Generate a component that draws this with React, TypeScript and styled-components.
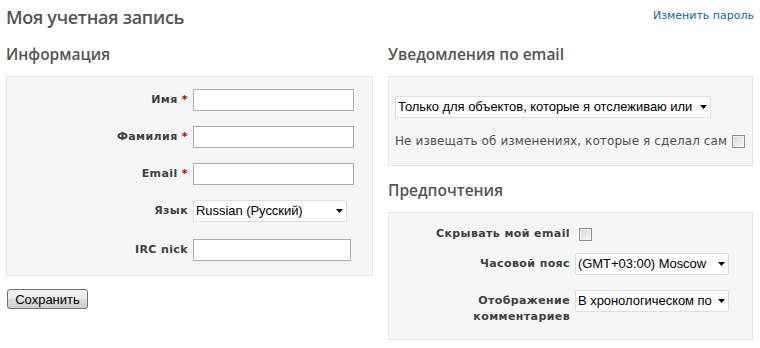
import React from "react";
import styled, { createGlobalStyle } from "styled-components";

const GlobalStyle = createGlobalStyle`
  html, body { margin: 0; padding: 0; background: #ffffff; }
  body { font-family: "DejaVu Sans", Verdana, sans-serif; font-size: 11px; color: #484848; }
  * { box-sizing: border-box; }
`;

const Page = styled.div`
  width: 760px;
  padding: 5px 7px 0 6px;
`;

const TopBar = styled.div`
  display: flex;
  justify-content: space-between;
  align-items: flex-start;
  height: 24px;
`;

const Title = styled.h2`
  margin: 0;
  font-family: "Open Sans", "Noto Sans", sans-serif;
  font-size: 18px;
  line-height: 24px;
  font-weight: 600;
  letter-spacing: -0.3px;
  color: #555555;
`;

const ContextLink = styled.a`
  margin-top: 3px;
  margin-right: -1px;
  font-size: 11px;
  line-height: 16px;
  color: #116699;
  text-decoration: none;
`;

const Columns = styled.div`
  display: grid;
  grid-template-columns: 367px 365px;
  column-gap: 15px;
  margin-top: 15px;
  align-items: start;
`;

const Column = styled.div`
  display: flex;
  flex-direction: column;
  align-items: flex-start;
`;

const SectionTitle = styled.h3<{ $mt?: number }>`
  margin: ${(p) => p.$mt ?? 0}px 0 12px;
  font-family: "Open Sans", "Noto Sans", sans-serif;
  font-size: 15.5px;
  line-height: 20px;
  font-weight: 600;
  color: #555555;
`;

const Box = styled.div<{ $pad: string }>`
  align-self: stretch;
  display: flex;
  flex-direction: column;
  align-items: flex-start;
  padding: ${(p) => p.$pad};
  background: #f6f6f6;
  border: 1px solid #e4e4e4;
  color: #505050;
`;

const FieldRow = styled.div<{ $mt?: number }>`
  display: grid;
  grid-template-columns: 175px auto;
  column-gap: 5px;
  align-items: start;
  margin-top: ${(p) => p.$mt ?? 0}px;
`;

const Label = styled.label`
  padding-top: 3px;
  font-weight: bold;
  font-size: 11px;
  line-height: 16px;
  letter-spacing: 0.4px;
  text-align: right;
  color: #3f3f3f;
`;

const Required = styled.span`
  color: #bb0000;
`;

const TextInput = styled.input<{ $w: number }>`
  width: ${(p) => p.$w}px;
  height: 22px;
  margin: 0;
  padding: 1px 3px;
  border: 1px solid #abadb3;
  background: #ffffff;
  font-family: "Liberation Sans", Arial, sans-serif;
  font-size: 13px;
`;

const SelectWrap = styled.div<{ $w: number }>`
  position: relative;
  width: ${(p) => p.$w}px;
  height: 22px;
`;

const Select = styled.select`
  appearance: none;
  width: 100%;
  height: 100%;
  margin: 0;
  padding: 0 16px 0 2px;
  border: 1px solid #dedede;
  border-radius: 2px;
  background: #ffffff;
  color: #000000;
  font-family: "Liberation Sans", Arial, sans-serif;
  font-size: 13px;
  letter-spacing: -0.05px;
  line-height: 20px;
  text-overflow: clip;
  white-space: nowrap;
  overflow: hidden;
`;

const Arrow = styled.svg`
  position: absolute;
  right: 4px;
  top: 9px;
  pointer-events: none;
`;

const CheckLine = styled.div`
  display: flex;
  align-items: center;
  gap: 5px;
  margin-top: 14px;
  font-size: 12px;
  line-height: 18px;
  letter-spacing: 0.1px;
  color: #505050;
`;

const Check = styled.input.attrs({ type: "checkbox" })<{ $m?: string }>`
  appearance: none;
  flex: none;
  width: 13px;
  height: 13px;
  margin: ${(p) => p.$m ?? "0"};
  border: 1px solid #8f8f8f;
  background: linear-gradient(135deg, #d8d8d8 0%, #ececec 60%, #f8f8f8 100%);
  box-shadow: inset 0 0 0 1px #f4f4f4;
`;

const SaveButton = styled.button`
  margin: 13px 0 0 1px;
  width: 81px;
  height: 20px;
  padding: 0;
  border: 1px solid #707070;
  border-radius: 3px;
  background: linear-gradient(#f2f2f2 0%, #ebebeb 50%, #dddddd 51%, #cfcfcf 100%);
  font-family: "Liberation Sans", Arial, sans-serif;
  font-size: 13px;
  color: #000000;
`;

const DropArrow = () => (
  <Arrow width="7" height="4" viewBox="0 0 7 4">
    <path d="M0 0 H7 L3.5 4 Z" fill="#000" />
  </Arrow>
);

const SelectField = ({ w, value }: { w: number; value: string }) => (
  <SelectWrap $w={w}>
    <Select defaultValue={value}>
      <option value={value}>{value}</option>
    </Select>
    <DropArrow />
  </SelectWrap>
);

export default function App() {
  return (
    <>
      <GlobalStyle />
      <Page>
        <TopBar>
          <Title>Моя учетная запись</Title>
          <ContextLink href="#">Изменить пароль</ContextLink>
        </TopBar>
        <Columns>
          <Column>
            <SectionTitle>Информация</SectionTitle>
            <Box $pad="12px 6px 14px">
              <FieldRow>
                <Label>
                  Имя <Required>*</Required>
                </Label>
                <TextInput $w={161} />
              </FieldRow>
              <FieldRow $mt={15}>
                <Label>
                  Фамилия <Required>*</Required>
                </Label>
                <TextInput $w={161} />
              </FieldRow>
              <FieldRow $mt={15}>
                <Label>
                  Email <Required>*</Required>
                </Label>
                <TextInput $w={161} />
              </FieldRow>
              <FieldRow $mt={15}>
                <Label>Язык</Label>
                <SelectField w={154} value="Russian (Русский)" />
              </FieldRow>
              <FieldRow $mt={17}>
                <Label>IRC nick</Label>
                <TextInput $w={158} />
              </FieldRow>
            </Box>
            <SaveButton>Сохранить</SaveButton>
          </Column>
          <Column>
            <SectionTitle>Уведомления по email</SectionTitle>
            <Box $pad="19px 6px 15px">
              <SelectField w={316} value="Только для объектов, которые я отслеживаю или в которых участвую" />
              <CheckLine>
                Не извещать об изменениях, которые я сделал сам
                <Check />
              </CheckLine>
            </Box>
            <SectionTitle $mt={14}>Предпочтения</SectionTitle>
            <Box $pad="10px 6px 14px">
              <FieldRow>
                <Label>Скрывать мой email</Label>
                <Check $m="5px 0 0 4px" />
              </FieldRow>
              <FieldRow $mt={11}>
                <Label>Часовой пояс</Label>
                <SelectField w={154} value="(GMT+03:00) Moscow" />
              </FieldRow>
              <FieldRow $mt={15}>
                <Label>
                  Отображение
                  <br />
                  комментариев
                </Label>
                <SelectField w={154} value="В хронологическом порядке" />
              </FieldRow>
            </Box>
          </Column>
        </Columns>
      </Page>
    </>
  );
}
